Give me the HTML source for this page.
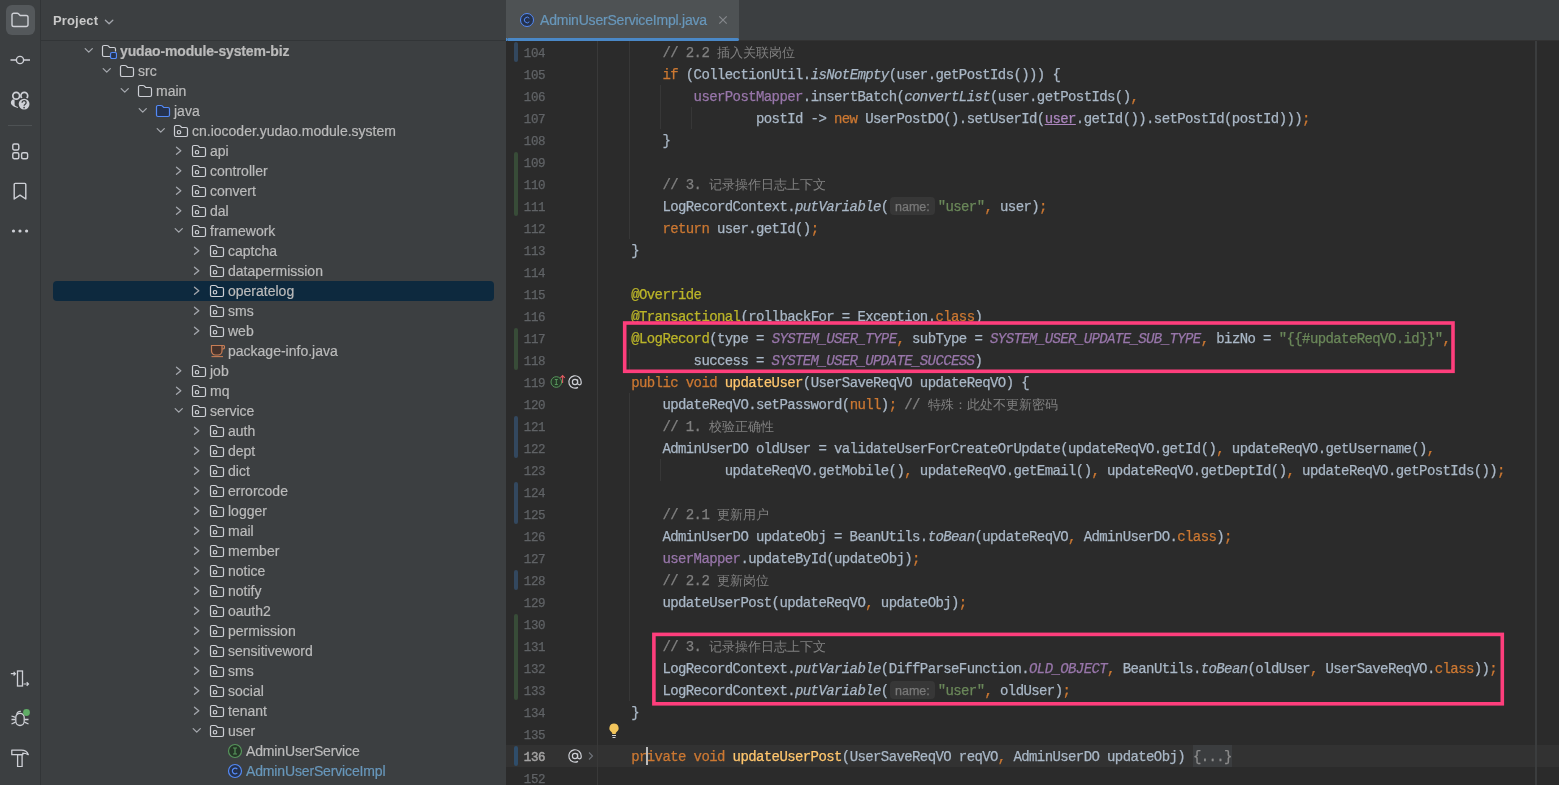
<!DOCTYPE html>
<html><head><meta charset="utf-8"><title>AdminUserServiceImpl.java</title>
<style>
html,body{margin:0;padding:0;}
body{width:1559px;height:785px;overflow:hidden;background:#3c3f41;position:relative;font-family:"Liberation Sans",sans-serif;font-size:13px;color:#bbbbbb;}
div{box-sizing:border-box;}
#strip{position:absolute;left:0;top:0;width:40px;height:785px;background:#3c3f41;}
#vsep{position:absolute;left:40px;top:0;width:1px;height:785px;background:#323537;}
#proj{position:absolute;left:41px;top:0;width:466px;height:785px;background:#3c3f41;overflow:hidden;}
#phead{position:absolute;left:41px;top:0;width:466px;height:40px;}
#hsep{position:absolute;left:41px;top:40px;width:466px;height:1px;background:#323537;}
#ptitle{position:absolute;left:53px;top:13px;font-weight:bold;font-size:13px;line-height:16px;color:#c9c9c9;letter-spacing:0.150px;}
.selbg{position:absolute;left:53px;width:441px;height:20px;background:#0d293e;border-radius:4px;}
.chv,.icn{position:absolute;width:16px;height:16px;}
.ic,.ch{width:16px;height:16px;display:block;}
.tx{-webkit-text-stroke:0.200px;position:absolute;margin-top:0px;height:20px;line-height:20px;white-space:nowrap;font-size:14px;color:#bbbbbb;letter-spacing:0px;}
.tx.bold{font-weight:bold;letter-spacing:-0.15px;}
.tx.blue{color:#6897bb;}
.tx.nar{letter-spacing:-0.150px;}
#ed{position:absolute;left:507px;top:0;width:1052px;height:785px;background:#2b2b2b;overflow:hidden;}
#tabbar{position:absolute;left:0;top:0;width:1052px;height:40px;background:#3c3f41;}
#tabline{position:absolute;left:0;top:40px;width:1052px;height:1px;background:#323232;}
#tab{position:absolute;left:0;top:0;width:232px;height:40px;background:#4e5254;}
#tabu{position:absolute;left:0;top:38px;width:232px;height:3px;background:#4a88c7;border-radius:1.5px;}
#tabtx{-webkit-text-stroke:0.200px;position:absolute;left:33px;top:10px;line-height:20px;font-size:14px;color:#6897bb;white-space:nowrap;letter-spacing:-0.200px;}
#caretrow{position:absolute;left:0;top:745px;width:1052px;height:22px;background:#323232;}
.ln{-webkit-text-stroke:0.250px;position:absolute;left:16.700px;width:40px;height:22px;line-height:22px;margin-top:2px;letter-spacing:-0.300px;font-family:"Liberation Mono",monospace;font-size:12.500px;color:#606366;white-space:pre;}
.ln.cur{color:#a4a3a3;-webkit-text-stroke:0.450px;}
.cl{-webkit-text-stroke:0.250px;position:absolute;left:93px;height:22px;line-height:22px;margin-top:1px;font-family:"Liberation Mono",monospace;font-size:14px;letter-spacing:-0.601px;color:#a9b7c6;white-space:pre;}
.k{color:#cc7832;}.c{color:#808080;}.a{color:#bbb529;}.f{color:#9876aa;}.s{color:#6a8759;}.m{color:#ffc66d;}
.i{font-style:italic;}.fi{color:#9876aa;font-style:italic;}
.u{color:#ab85bd;text-decoration:underline;text-decoration-color:#ab85bd;}
.z{font-size:13px;letter-spacing:0;-webkit-text-stroke:0;}
.fold{color:#8c8c8c;}
.hint{display:inline-block;width:49px;height:22px;vertical-align:top;position:relative;}
.hb{position:absolute;left:1.500px;top:1px;width:44.500px;height:17.500px;line-height:20px;border-radius:4px;background:#373737;color:#787878;letter-spacing:0;font-family:"Liberation Sans",sans-serif;font-size:12.500px;text-align:center;font-style:normal;}
.vm{position:absolute;left:7px;width:4px;border-radius:2px;}
.vm.b{background:#33485f;}.vm.cur{background:#2f4d6a;}.vm.g{background:#384c38;}
.ig{position:absolute;width:1px;background:#373737;}
#gsep{position:absolute;left:90px;top:41px;width:1px;height:744px;background:#393939;}
#rsep{position:absolute;left:1028px;top:41px;width:2px;height:744px;background:#3b3d3e;}
.pbox{position:absolute;border:3.600px solid #fe3e7c;}
#caret{position:absolute;left:139px;top:747px;width:2px;height:18px;background:#bbbbbb;}
.abs{position:absolute;}
#wrap{position:absolute;left:0;top:0;width:1559px;height:785px;will-change:transform;}
</style></head><body>
<div id="wrap">
<div id="strip">
 <div class="abs" style="left:6px;top:5px;width:29px;height:30px;border-radius:6px;background:#54585b;"></div>
 <svg class="abs" style="left:10px;top:10px" width="20" height="20" viewBox="0 0 20 20"><path d="M2 5A1.800 1.800 0 0 1 3.800 3.200h3.400a1.800 1.800 0 0 1 1.270.530L10.200 5.500H16.200A1.800 1.800 0 0 1 18 7.300v7.400a1.800 1.800 0 0 1 -1.800 1.800H3.800A1.800 1.800 0 0 1 2 14.700Z" fill="none" stroke="#ced0d6" stroke-width="1.400"/></svg>
 <svg class="abs" style="left:10px;top:50px" width="20" height="20" viewBox="0 0 20 20"><path d="M0.500 10h5.500M14 10h6" stroke="#ced0d6" stroke-width="1.400"/><circle cx="10" cy="10" r="3.600" fill="none" stroke="#ced0d6" stroke-width="1.400"/></svg>
 <svg class="abs" style="left:10px;top:90px" width="20" height="20" viewBox="0 0 20 20"><circle cx="6.200" cy="5.700" r="3.400" fill="none" stroke="#ced0d6" stroke-width="1.700"/><circle cx="14.300" cy="5.700" r="3.400" fill="none" stroke="#ced0d6" stroke-width="1.700"/><path d="M3.200 9.300C0.600 10.800 0 13.500 2.500 15.600C4 16.900 6 17.700 7.900 18.100L7.900 16.900C6 16.300 4.600 15.500 4.600 14.400L4.600 10.200Z" fill="#ced0d6"/><circle cx="14.100" cy="14.100" r="6.500" fill="#3c3f41"/><circle cx="14.100" cy="14.100" r="5.400" fill="#ced0d6"/><path d="M12.100 12.700a2 1.900 0 1 1 3.100 1.500c-.800.500-1.100.800-1.100 1.600" fill="none" stroke="#3c3f41" stroke-width="1.300"/><circle cx="14.100" cy="17.600" r="0.850" fill="#3c3f41"/></svg>
 <div class="abs" style="left:8px;top:125px;width:24px;height:1px;background:#4e5254;"></div>
 <svg class="abs" style="left:10px;top:141px" width="20" height="20" viewBox="0 0 20 20"><rect x="2.800" y="3" width="6" height="6" rx="1.500" fill="none" stroke="#ced0d6" stroke-width="1.400"/><rect x="2.800" y="11.700" width="6" height="6" rx="1.500" fill="none" stroke="#ced0d6" stroke-width="1.400"/><rect x="11.600" y="11.700" width="6" height="6" rx="1.500" fill="none" stroke="#ced0d6" stroke-width="1.400"/></svg>
 <svg class="abs" style="left:10px;top:181px" width="20" height="20" viewBox="0 0 20 20"><path d="M4.200 3.400a1 1 0 0 1 1-1h9.600a1 1 0 0 1 1 1V18L10 14.200 4.200 18Z" fill="none" stroke="#ced0d6" stroke-width="1.400" stroke-linejoin="round"/></svg>
 <svg class="abs" style="left:10px;top:221px" width="20" height="20" viewBox="0 0 20 20"><circle cx="3.500" cy="10" r="1.600" fill="#ced0d6"/><circle cx="10" cy="10" r="1.600" fill="#ced0d6"/><circle cx="16.600" cy="10" r="1.600" fill="#ced0d6"/></svg>
 <svg class="abs" style="left:10px;top:669px" width="20" height="20" viewBox="0 0 20 20"><rect x="7.500" y="2" width="5" height="15" fill="none" stroke="#ced0d6" stroke-width="1.300"/><path d="M0.800 4.700h4.500M3.600 2.900l1.800 1.800-1.800 1.800M13.500 15h5M16.700 13.200l1.800 1.800-1.800 1.800" fill="none" stroke="#ced0d6" stroke-width="1.200"/></svg>
 <svg class="abs" style="left:10px;top:708px" width="20" height="20" viewBox="0 0 20 20"><path d="M5.800 9.500a4.200 4.200 0 0 1 8.400 0v3.800a4.200 4.200 0 0 1 -8.400 0Z" fill="none" stroke="#ced0d6" stroke-width="1.300"/><path d="M6.800 6.500a3.300 3.300 0 0 1 4-3M1.500 8l4 1.300M1.500 11.500h4M1.500 16l4-1.800M18.500 11.500h-4M18.500 16l-4-1.800" fill="none" stroke="#ced0d6" stroke-width="1.300"/><circle cx="16.500" cy="4.500" r="3.400" fill="#5fad65"/></svg>
 <svg class="abs" style="left:10px;top:747px" width="20" height="20" viewBox="0 0 20 20"><path d="M1.800 3.200h9.500c3.500 0 6 1.500 7 4.500-2-1.200-4-1.500-5.500-1.500v1.500H1.800Z" fill="none" stroke="#ced0d6" stroke-width="1.300" stroke-linejoin="round"/><path d="M7.600 7.700h4.500v12h-4.500Z" fill="none" stroke="#ced0d6" stroke-width="1.300" stroke-linejoin="round"/></svg>
</div>
<div id="vsep"></div>
<div id="hsep"></div>
<div id="ptitle">Project</div>
<svg class="abs" style="left:101px;top:13.500px" width="16" height="16" viewBox="0 0 16 16"><path d="M4.400 6.200l3.700 3.600 3.700-3.600" fill="none" stroke="#a4a7ad" stroke-width="1.300" stroke-linecap="round" stroke-linejoin="round"/></svg>
<div class="chv" style="left:81px;top:43px"><svg class="ch" viewBox="0 0 16 16"><path d="M4.200 5.600L7.750 9.100 11.300 5.600" fill="none" stroke="#a4a7ad" stroke-width="1.300" stroke-linecap="round" stroke-linejoin="round"/></svg></div><div class="icn" style="left:101px;top:43px"><svg class="ic" viewBox="0 0 16 16"><path d="M9 13.500H3A1.5 1.5 0 0 1 1.5 12V4A1.5 1.5 0 0 1 3 2.5h3.100a1.500 1.500 0 0 1 1.060.440L8.700 4.500H13A1.500 1.500 0 0 1 14.500 6v2.500" fill="none" stroke="#ced0d6" stroke-width="1.200"/><rect x="9.5" y="9.500" width="6" height="6" rx="1.500" fill="#25324d" stroke="#548af7" stroke-width="1.200"/></svg></div><div class="tx bold" id="t0" style="left:120px;top:41px">yudao-module-system-biz</div>
<div class="chv" style="left:99px;top:63px"><svg class="ch" viewBox="0 0 16 16"><path d="M4.200 5.600L7.750 9.100 11.300 5.600" fill="none" stroke="#a4a7ad" stroke-width="1.300" stroke-linecap="round" stroke-linejoin="round"/></svg></div><div class="icn" style="left:119px;top:63px"><svg class="ic" viewBox="0 0 16 16"><path d="M1.5 4A1.5 1.5 0 0 1 3 2.5h3.1a1.5 1.5 0 0 1 1.06.44L8.7 4.5H13A1.5 1.5 0 0 1 14.5 6v6A1.5 1.5 0 0 1 13 13.500H3A1.5 1.5 0 0 1 1.5 12Z" fill="none" stroke="#ced0d6" stroke-width="1.200"/></svg></div><div class="tx" id="t1" style="left:138px;top:61px">src</div>
<div class="chv" style="left:117px;top:83px"><svg class="ch" viewBox="0 0 16 16"><path d="M4.200 5.600L7.750 9.100 11.300 5.600" fill="none" stroke="#a4a7ad" stroke-width="1.300" stroke-linecap="round" stroke-linejoin="round"/></svg></div><div class="icn" style="left:137px;top:83px"><svg class="ic" viewBox="0 0 16 16"><path d="M1.5 4A1.5 1.5 0 0 1 3 2.5h3.1a1.5 1.5 0 0 1 1.06.44L8.7 4.5H13A1.5 1.5 0 0 1 14.5 6v6A1.5 1.5 0 0 1 13 13.500H3A1.5 1.5 0 0 1 1.5 12Z" fill="none" stroke="#ced0d6" stroke-width="1.200"/></svg></div><div class="tx" id="t2" style="left:156px;top:81px">main</div>
<div class="chv" style="left:135px;top:103px"><svg class="ch" viewBox="0 0 16 16"><path d="M4.200 5.600L7.750 9.100 11.300 5.600" fill="none" stroke="#a4a7ad" stroke-width="1.300" stroke-linecap="round" stroke-linejoin="round"/></svg></div><div class="icn" style="left:155px;top:103px"><svg class="ic" viewBox="0 0 16 16"><path d="M1.5 4A1.5 1.5 0 0 1 3 2.5h3.1a1.5 1.5 0 0 1 1.06.44L8.7 4.5H13A1.5 1.5 0 0 1 14.5 6v6A1.5 1.5 0 0 1 13 13.500H3A1.5 1.5 0 0 1 1.5 12Z" fill="#25324d" stroke="#548af7" stroke-width="1.200"/></svg></div><div class="tx" id="t3" style="left:174px;top:101px">java</div>
<div class="chv" style="left:153px;top:123px"><svg class="ch" viewBox="0 0 16 16"><path d="M4.200 5.600L7.750 9.100 11.300 5.600" fill="none" stroke="#a4a7ad" stroke-width="1.300" stroke-linecap="round" stroke-linejoin="round"/></svg></div><div class="icn" style="left:173px;top:123px"><svg class="ic" viewBox="0 0 16 16"><path d="M1.5 4A1.5 1.5 0 0 1 3 2.5h3.1a1.5 1.5 0 0 1 1.06.44L8.7 4.5H13A1.5 1.5 0 0 1 14.5 6v6A1.5 1.5 0 0 1 13 13.500H3A1.5 1.5 0 0 1 1.5 12Z" fill="none" stroke="#ced0d6" stroke-width="1.200"/><circle cx="6" cy="9.250" r="1.750" fill="none" stroke="#ced0d6" stroke-width="1.200"/></svg></div><div class="tx" id="t4" style="left:192px;top:121px">cn.iocoder.yudao.module.system</div>
<div class="chv" style="left:171px;top:143px"><svg class="ch" viewBox="0 0 16 16"><path d="M5.500 4.200L9.800 7.750 5.500 11.300" fill="none" stroke="#a4a7ad" stroke-width="1.300" stroke-linecap="round" stroke-linejoin="round"/></svg></div><div class="icn" style="left:191px;top:143px"><svg class="ic" viewBox="0 0 16 16"><path d="M1.5 4A1.5 1.5 0 0 1 3 2.5h3.1a1.5 1.5 0 0 1 1.06.44L8.7 4.5H13A1.5 1.5 0 0 1 14.5 6v6A1.5 1.5 0 0 1 13 13.500H3A1.5 1.5 0 0 1 1.5 12Z" fill="none" stroke="#ced0d6" stroke-width="1.200"/><circle cx="6" cy="9.250" r="1.750" fill="none" stroke="#ced0d6" stroke-width="1.200"/></svg></div><div class="tx" id="t5" style="left:210px;top:141px">api</div>
<div class="chv" style="left:171px;top:163px"><svg class="ch" viewBox="0 0 16 16"><path d="M5.500 4.200L9.800 7.750 5.500 11.300" fill="none" stroke="#a4a7ad" stroke-width="1.300" stroke-linecap="round" stroke-linejoin="round"/></svg></div><div class="icn" style="left:191px;top:163px"><svg class="ic" viewBox="0 0 16 16"><path d="M1.5 4A1.5 1.5 0 0 1 3 2.5h3.1a1.5 1.5 0 0 1 1.06.44L8.7 4.5H13A1.5 1.5 0 0 1 14.5 6v6A1.5 1.5 0 0 1 13 13.500H3A1.5 1.5 0 0 1 1.5 12Z" fill="none" stroke="#ced0d6" stroke-width="1.200"/><circle cx="6" cy="9.250" r="1.750" fill="none" stroke="#ced0d6" stroke-width="1.200"/></svg></div><div class="tx" id="t6" style="left:210px;top:161px">controller</div>
<div class="chv" style="left:171px;top:183px"><svg class="ch" viewBox="0 0 16 16"><path d="M5.500 4.200L9.800 7.750 5.500 11.300" fill="none" stroke="#a4a7ad" stroke-width="1.300" stroke-linecap="round" stroke-linejoin="round"/></svg></div><div class="icn" style="left:191px;top:183px"><svg class="ic" viewBox="0 0 16 16"><path d="M1.5 4A1.5 1.5 0 0 1 3 2.5h3.1a1.5 1.5 0 0 1 1.06.44L8.7 4.5H13A1.5 1.5 0 0 1 14.5 6v6A1.5 1.5 0 0 1 13 13.500H3A1.5 1.5 0 0 1 1.5 12Z" fill="none" stroke="#ced0d6" stroke-width="1.200"/><circle cx="6" cy="9.250" r="1.750" fill="none" stroke="#ced0d6" stroke-width="1.200"/></svg></div><div class="tx" id="t7" style="left:210px;top:181px">convert</div>
<div class="chv" style="left:171px;top:203px"><svg class="ch" viewBox="0 0 16 16"><path d="M5.500 4.200L9.800 7.750 5.500 11.300" fill="none" stroke="#a4a7ad" stroke-width="1.300" stroke-linecap="round" stroke-linejoin="round"/></svg></div><div class="icn" style="left:191px;top:203px"><svg class="ic" viewBox="0 0 16 16"><path d="M1.5 4A1.5 1.5 0 0 1 3 2.5h3.1a1.5 1.5 0 0 1 1.06.44L8.7 4.5H13A1.5 1.5 0 0 1 14.5 6v6A1.5 1.5 0 0 1 13 13.500H3A1.5 1.5 0 0 1 1.5 12Z" fill="none" stroke="#ced0d6" stroke-width="1.200"/><circle cx="6" cy="9.250" r="1.750" fill="none" stroke="#ced0d6" stroke-width="1.200"/></svg></div><div class="tx" id="t8" style="left:210px;top:201px">dal</div>
<div class="chv" style="left:171px;top:223px"><svg class="ch" viewBox="0 0 16 16"><path d="M4.200 5.600L7.750 9.100 11.300 5.600" fill="none" stroke="#a4a7ad" stroke-width="1.300" stroke-linecap="round" stroke-linejoin="round"/></svg></div><div class="icn" style="left:191px;top:223px"><svg class="ic" viewBox="0 0 16 16"><path d="M1.5 4A1.5 1.5 0 0 1 3 2.5h3.1a1.5 1.5 0 0 1 1.06.44L8.7 4.5H13A1.5 1.5 0 0 1 14.5 6v6A1.5 1.5 0 0 1 13 13.500H3A1.5 1.5 0 0 1 1.5 12Z" fill="none" stroke="#ced0d6" stroke-width="1.200"/><circle cx="6" cy="9.250" r="1.750" fill="none" stroke="#ced0d6" stroke-width="1.200"/></svg></div><div class="tx" id="t9" style="left:210px;top:221px">framework</div>
<div class="chv" style="left:189px;top:243px"><svg class="ch" viewBox="0 0 16 16"><path d="M5.500 4.200L9.800 7.750 5.500 11.300" fill="none" stroke="#a4a7ad" stroke-width="1.300" stroke-linecap="round" stroke-linejoin="round"/></svg></div><div class="icn" style="left:209px;top:243px"><svg class="ic" viewBox="0 0 16 16"><path d="M1.5 4A1.5 1.5 0 0 1 3 2.5h3.1a1.5 1.5 0 0 1 1.06.44L8.7 4.5H13A1.5 1.5 0 0 1 14.5 6v6A1.5 1.5 0 0 1 13 13.500H3A1.5 1.5 0 0 1 1.5 12Z" fill="none" stroke="#ced0d6" stroke-width="1.200"/><circle cx="6" cy="9.250" r="1.750" fill="none" stroke="#ced0d6" stroke-width="1.200"/></svg></div><div class="tx" id="t10" style="left:228px;top:241px">captcha</div>
<div class="chv" style="left:189px;top:263px"><svg class="ch" viewBox="0 0 16 16"><path d="M5.500 4.200L9.800 7.750 5.500 11.300" fill="none" stroke="#a4a7ad" stroke-width="1.300" stroke-linecap="round" stroke-linejoin="round"/></svg></div><div class="icn" style="left:209px;top:263px"><svg class="ic" viewBox="0 0 16 16"><path d="M1.5 4A1.5 1.5 0 0 1 3 2.5h3.1a1.5 1.5 0 0 1 1.06.44L8.7 4.5H13A1.5 1.5 0 0 1 14.5 6v6A1.5 1.5 0 0 1 13 13.500H3A1.5 1.5 0 0 1 1.5 12Z" fill="none" stroke="#ced0d6" stroke-width="1.200"/><circle cx="6" cy="9.250" r="1.750" fill="none" stroke="#ced0d6" stroke-width="1.200"/></svg></div><div class="tx" id="t11" style="left:228px;top:261px">datapermission</div>
<div class="selbg" style="top:281px"></div><div class="chv" style="left:189px;top:283px"><svg class="ch" viewBox="0 0 16 16"><path d="M5.500 4.200L9.800 7.750 5.500 11.300" fill="none" stroke="#a4a7ad" stroke-width="1.300" stroke-linecap="round" stroke-linejoin="round"/></svg></div><div class="icn" style="left:209px;top:283px"><svg class="ic" viewBox="0 0 16 16"><path d="M1.5 4A1.5 1.5 0 0 1 3 2.5h3.1a1.5 1.5 0 0 1 1.06.44L8.7 4.5H13A1.5 1.5 0 0 1 14.5 6v6A1.5 1.5 0 0 1 13 13.500H3A1.5 1.5 0 0 1 1.5 12Z" fill="none" stroke="#ced0d6" stroke-width="1.200"/><circle cx="6" cy="9.250" r="1.750" fill="none" stroke="#ced0d6" stroke-width="1.200"/></svg></div><div class="tx" id="t12" style="left:228px;top:281px">operatelog</div>
<div class="chv" style="left:189px;top:303px"><svg class="ch" viewBox="0 0 16 16"><path d="M5.500 4.200L9.800 7.750 5.500 11.300" fill="none" stroke="#a4a7ad" stroke-width="1.300" stroke-linecap="round" stroke-linejoin="round"/></svg></div><div class="icn" style="left:209px;top:303px"><svg class="ic" viewBox="0 0 16 16"><path d="M1.5 4A1.5 1.5 0 0 1 3 2.5h3.1a1.5 1.5 0 0 1 1.06.44L8.7 4.5H13A1.5 1.5 0 0 1 14.5 6v6A1.5 1.5 0 0 1 13 13.500H3A1.5 1.5 0 0 1 1.5 12Z" fill="none" stroke="#ced0d6" stroke-width="1.200"/><circle cx="6" cy="9.250" r="1.750" fill="none" stroke="#ced0d6" stroke-width="1.200"/></svg></div><div class="tx" id="t13" style="left:228px;top:301px">sms</div>
<div class="chv" style="left:189px;top:323px"><svg class="ch" viewBox="0 0 16 16"><path d="M5.500 4.200L9.800 7.750 5.500 11.300" fill="none" stroke="#a4a7ad" stroke-width="1.300" stroke-linecap="round" stroke-linejoin="round"/></svg></div><div class="icn" style="left:209px;top:323px"><svg class="ic" viewBox="0 0 16 16"><path d="M1.5 4A1.5 1.5 0 0 1 3 2.5h3.1a1.5 1.5 0 0 1 1.06.44L8.7 4.5H13A1.5 1.5 0 0 1 14.5 6v6A1.5 1.5 0 0 1 13 13.500H3A1.5 1.5 0 0 1 1.5 12Z" fill="none" stroke="#ced0d6" stroke-width="1.200"/><circle cx="6" cy="9.250" r="1.750" fill="none" stroke="#ced0d6" stroke-width="1.200"/></svg></div><div class="tx" id="t14" style="left:228px;top:321px">web</div>
<div class="icn" style="left:209px;top:343px"><svg class="ic" viewBox="0 0 16 16"><path d="M2.500 2.500H13v5.500a4 4 0 0 1 -4 4H6.500a4 4 0 0 1 -4 -4Z" fill="#45322b" stroke="#c77d55" stroke-width="1.200"/><path d="M13 2.500h1.400a1.100 1.100 0 0 1 1.100 1.100v.700a1.700 1.700 0 0 1 -1.700 1.700H13" fill="none" stroke="#c77d55" stroke-width="1.200"/><path d="M2.500 13.600H14" stroke="#c77d55" stroke-width="1.100"/></svg></div><div class="tx" id="t15" style="left:228px;top:341px">package-info.java</div>
<div class="chv" style="left:171px;top:363px"><svg class="ch" viewBox="0 0 16 16"><path d="M5.500 4.200L9.800 7.750 5.500 11.300" fill="none" stroke="#a4a7ad" stroke-width="1.300" stroke-linecap="round" stroke-linejoin="round"/></svg></div><div class="icn" style="left:191px;top:363px"><svg class="ic" viewBox="0 0 16 16"><path d="M1.5 4A1.5 1.5 0 0 1 3 2.5h3.1a1.5 1.5 0 0 1 1.06.44L8.7 4.5H13A1.5 1.5 0 0 1 14.5 6v6A1.5 1.5 0 0 1 13 13.500H3A1.5 1.5 0 0 1 1.5 12Z" fill="none" stroke="#ced0d6" stroke-width="1.200"/><circle cx="6" cy="9.250" r="1.750" fill="none" stroke="#ced0d6" stroke-width="1.200"/></svg></div><div class="tx" id="t16" style="left:210px;top:361px">job</div>
<div class="chv" style="left:171px;top:383px"><svg class="ch" viewBox="0 0 16 16"><path d="M5.500 4.200L9.800 7.750 5.500 11.300" fill="none" stroke="#a4a7ad" stroke-width="1.300" stroke-linecap="round" stroke-linejoin="round"/></svg></div><div class="icn" style="left:191px;top:383px"><svg class="ic" viewBox="0 0 16 16"><path d="M1.5 4A1.5 1.5 0 0 1 3 2.5h3.1a1.5 1.5 0 0 1 1.06.44L8.7 4.5H13A1.5 1.5 0 0 1 14.5 6v6A1.5 1.5 0 0 1 13 13.500H3A1.5 1.5 0 0 1 1.5 12Z" fill="none" stroke="#ced0d6" stroke-width="1.200"/><circle cx="6" cy="9.250" r="1.750" fill="none" stroke="#ced0d6" stroke-width="1.200"/></svg></div><div class="tx" id="t17" style="left:210px;top:381px">mq</div>
<div class="chv" style="left:171px;top:403px"><svg class="ch" viewBox="0 0 16 16"><path d="M4.200 5.600L7.750 9.100 11.300 5.600" fill="none" stroke="#a4a7ad" stroke-width="1.300" stroke-linecap="round" stroke-linejoin="round"/></svg></div><div class="icn" style="left:191px;top:403px"><svg class="ic" viewBox="0 0 16 16"><path d="M1.5 4A1.5 1.5 0 0 1 3 2.5h3.1a1.5 1.5 0 0 1 1.06.44L8.7 4.5H13A1.5 1.5 0 0 1 14.5 6v6A1.5 1.5 0 0 1 13 13.500H3A1.5 1.5 0 0 1 1.5 12Z" fill="none" stroke="#ced0d6" stroke-width="1.200"/><circle cx="6" cy="9.250" r="1.750" fill="none" stroke="#ced0d6" stroke-width="1.200"/></svg></div><div class="tx" id="t18" style="left:210px;top:401px">service</div>
<div class="chv" style="left:189px;top:423px"><svg class="ch" viewBox="0 0 16 16"><path d="M5.500 4.200L9.800 7.750 5.500 11.300" fill="none" stroke="#a4a7ad" stroke-width="1.300" stroke-linecap="round" stroke-linejoin="round"/></svg></div><div class="icn" style="left:209px;top:423px"><svg class="ic" viewBox="0 0 16 16"><path d="M1.5 4A1.5 1.5 0 0 1 3 2.5h3.1a1.5 1.5 0 0 1 1.06.44L8.7 4.5H13A1.5 1.5 0 0 1 14.5 6v6A1.5 1.5 0 0 1 13 13.500H3A1.5 1.5 0 0 1 1.5 12Z" fill="none" stroke="#ced0d6" stroke-width="1.200"/><circle cx="6" cy="9.250" r="1.750" fill="none" stroke="#ced0d6" stroke-width="1.200"/></svg></div><div class="tx" id="t19" style="left:228px;top:421px">auth</div>
<div class="chv" style="left:189px;top:443px"><svg class="ch" viewBox="0 0 16 16"><path d="M5.500 4.200L9.800 7.750 5.500 11.300" fill="none" stroke="#a4a7ad" stroke-width="1.300" stroke-linecap="round" stroke-linejoin="round"/></svg></div><div class="icn" style="left:209px;top:443px"><svg class="ic" viewBox="0 0 16 16"><path d="M1.5 4A1.5 1.5 0 0 1 3 2.5h3.1a1.5 1.5 0 0 1 1.06.44L8.7 4.5H13A1.5 1.5 0 0 1 14.5 6v6A1.5 1.5 0 0 1 13 13.500H3A1.5 1.5 0 0 1 1.5 12Z" fill="none" stroke="#ced0d6" stroke-width="1.200"/><circle cx="6" cy="9.250" r="1.750" fill="none" stroke="#ced0d6" stroke-width="1.200"/></svg></div><div class="tx" id="t20" style="left:228px;top:441px">dept</div>
<div class="chv" style="left:189px;top:463px"><svg class="ch" viewBox="0 0 16 16"><path d="M5.500 4.200L9.800 7.750 5.500 11.300" fill="none" stroke="#a4a7ad" stroke-width="1.300" stroke-linecap="round" stroke-linejoin="round"/></svg></div><div class="icn" style="left:209px;top:463px"><svg class="ic" viewBox="0 0 16 16"><path d="M1.5 4A1.5 1.5 0 0 1 3 2.5h3.1a1.5 1.5 0 0 1 1.06.44L8.7 4.5H13A1.5 1.5 0 0 1 14.5 6v6A1.5 1.5 0 0 1 13 13.500H3A1.5 1.5 0 0 1 1.5 12Z" fill="none" stroke="#ced0d6" stroke-width="1.200"/><circle cx="6" cy="9.250" r="1.750" fill="none" stroke="#ced0d6" stroke-width="1.200"/></svg></div><div class="tx" id="t21" style="left:228px;top:461px">dict</div>
<div class="chv" style="left:189px;top:483px"><svg class="ch" viewBox="0 0 16 16"><path d="M5.500 4.200L9.800 7.750 5.500 11.300" fill="none" stroke="#a4a7ad" stroke-width="1.300" stroke-linecap="round" stroke-linejoin="round"/></svg></div><div class="icn" style="left:209px;top:483px"><svg class="ic" viewBox="0 0 16 16"><path d="M1.5 4A1.5 1.5 0 0 1 3 2.5h3.1a1.5 1.5 0 0 1 1.06.44L8.7 4.5H13A1.5 1.5 0 0 1 14.5 6v6A1.5 1.5 0 0 1 13 13.500H3A1.5 1.5 0 0 1 1.5 12Z" fill="none" stroke="#ced0d6" stroke-width="1.200"/><circle cx="6" cy="9.250" r="1.750" fill="none" stroke="#ced0d6" stroke-width="1.200"/></svg></div><div class="tx" id="t22" style="left:228px;top:481px">errorcode</div>
<div class="chv" style="left:189px;top:503px"><svg class="ch" viewBox="0 0 16 16"><path d="M5.500 4.200L9.800 7.750 5.500 11.300" fill="none" stroke="#a4a7ad" stroke-width="1.300" stroke-linecap="round" stroke-linejoin="round"/></svg></div><div class="icn" style="left:209px;top:503px"><svg class="ic" viewBox="0 0 16 16"><path d="M1.5 4A1.5 1.5 0 0 1 3 2.5h3.1a1.5 1.5 0 0 1 1.06.44L8.7 4.5H13A1.5 1.5 0 0 1 14.5 6v6A1.5 1.5 0 0 1 13 13.500H3A1.5 1.5 0 0 1 1.5 12Z" fill="none" stroke="#ced0d6" stroke-width="1.200"/><circle cx="6" cy="9.250" r="1.750" fill="none" stroke="#ced0d6" stroke-width="1.200"/></svg></div><div class="tx" id="t23" style="left:228px;top:501px">logger</div>
<div class="chv" style="left:189px;top:523px"><svg class="ch" viewBox="0 0 16 16"><path d="M5.500 4.200L9.800 7.750 5.500 11.300" fill="none" stroke="#a4a7ad" stroke-width="1.300" stroke-linecap="round" stroke-linejoin="round"/></svg></div><div class="icn" style="left:209px;top:523px"><svg class="ic" viewBox="0 0 16 16"><path d="M1.5 4A1.5 1.5 0 0 1 3 2.5h3.1a1.5 1.5 0 0 1 1.06.44L8.7 4.5H13A1.5 1.5 0 0 1 14.5 6v6A1.5 1.5 0 0 1 13 13.500H3A1.5 1.5 0 0 1 1.5 12Z" fill="none" stroke="#ced0d6" stroke-width="1.200"/><circle cx="6" cy="9.250" r="1.750" fill="none" stroke="#ced0d6" stroke-width="1.200"/></svg></div><div class="tx" id="t24" style="left:228px;top:521px">mail</div>
<div class="chv" style="left:189px;top:543px"><svg class="ch" viewBox="0 0 16 16"><path d="M5.500 4.200L9.800 7.750 5.500 11.300" fill="none" stroke="#a4a7ad" stroke-width="1.300" stroke-linecap="round" stroke-linejoin="round"/></svg></div><div class="icn" style="left:209px;top:543px"><svg class="ic" viewBox="0 0 16 16"><path d="M1.5 4A1.5 1.5 0 0 1 3 2.5h3.1a1.5 1.5 0 0 1 1.06.44L8.7 4.5H13A1.5 1.5 0 0 1 14.5 6v6A1.5 1.5 0 0 1 13 13.500H3A1.5 1.5 0 0 1 1.5 12Z" fill="none" stroke="#ced0d6" stroke-width="1.200"/><circle cx="6" cy="9.250" r="1.750" fill="none" stroke="#ced0d6" stroke-width="1.200"/></svg></div><div class="tx" id="t25" style="left:228px;top:541px">member</div>
<div class="chv" style="left:189px;top:563px"><svg class="ch" viewBox="0 0 16 16"><path d="M5.500 4.200L9.800 7.750 5.500 11.300" fill="none" stroke="#a4a7ad" stroke-width="1.300" stroke-linecap="round" stroke-linejoin="round"/></svg></div><div class="icn" style="left:209px;top:563px"><svg class="ic" viewBox="0 0 16 16"><path d="M1.5 4A1.5 1.5 0 0 1 3 2.5h3.1a1.5 1.5 0 0 1 1.06.44L8.7 4.5H13A1.5 1.5 0 0 1 14.5 6v6A1.5 1.5 0 0 1 13 13.500H3A1.5 1.5 0 0 1 1.5 12Z" fill="none" stroke="#ced0d6" stroke-width="1.200"/><circle cx="6" cy="9.250" r="1.750" fill="none" stroke="#ced0d6" stroke-width="1.200"/></svg></div><div class="tx" id="t26" style="left:228px;top:561px">notice</div>
<div class="chv" style="left:189px;top:583px"><svg class="ch" viewBox="0 0 16 16"><path d="M5.500 4.200L9.800 7.750 5.500 11.300" fill="none" stroke="#a4a7ad" stroke-width="1.300" stroke-linecap="round" stroke-linejoin="round"/></svg></div><div class="icn" style="left:209px;top:583px"><svg class="ic" viewBox="0 0 16 16"><path d="M1.5 4A1.5 1.5 0 0 1 3 2.5h3.1a1.5 1.5 0 0 1 1.06.44L8.7 4.5H13A1.5 1.5 0 0 1 14.5 6v6A1.5 1.5 0 0 1 13 13.500H3A1.5 1.5 0 0 1 1.5 12Z" fill="none" stroke="#ced0d6" stroke-width="1.200"/><circle cx="6" cy="9.250" r="1.750" fill="none" stroke="#ced0d6" stroke-width="1.200"/></svg></div><div class="tx" id="t27" style="left:228px;top:581px">notify</div>
<div class="chv" style="left:189px;top:603px"><svg class="ch" viewBox="0 0 16 16"><path d="M5.500 4.200L9.800 7.750 5.500 11.300" fill="none" stroke="#a4a7ad" stroke-width="1.300" stroke-linecap="round" stroke-linejoin="round"/></svg></div><div class="icn" style="left:209px;top:603px"><svg class="ic" viewBox="0 0 16 16"><path d="M1.5 4A1.5 1.5 0 0 1 3 2.5h3.1a1.5 1.5 0 0 1 1.06.44L8.7 4.5H13A1.5 1.5 0 0 1 14.5 6v6A1.5 1.5 0 0 1 13 13.500H3A1.5 1.5 0 0 1 1.5 12Z" fill="none" stroke="#ced0d6" stroke-width="1.200"/><circle cx="6" cy="9.250" r="1.750" fill="none" stroke="#ced0d6" stroke-width="1.200"/></svg></div><div class="tx" id="t28" style="left:228px;top:601px">oauth2</div>
<div class="chv" style="left:189px;top:623px"><svg class="ch" viewBox="0 0 16 16"><path d="M5.500 4.200L9.800 7.750 5.500 11.300" fill="none" stroke="#a4a7ad" stroke-width="1.300" stroke-linecap="round" stroke-linejoin="round"/></svg></div><div class="icn" style="left:209px;top:623px"><svg class="ic" viewBox="0 0 16 16"><path d="M1.5 4A1.5 1.5 0 0 1 3 2.5h3.1a1.5 1.5 0 0 1 1.06.44L8.7 4.5H13A1.5 1.5 0 0 1 14.5 6v6A1.5 1.5 0 0 1 13 13.500H3A1.5 1.5 0 0 1 1.5 12Z" fill="none" stroke="#ced0d6" stroke-width="1.200"/><circle cx="6" cy="9.250" r="1.750" fill="none" stroke="#ced0d6" stroke-width="1.200"/></svg></div><div class="tx" id="t29" style="left:228px;top:621px">permission</div>
<div class="chv" style="left:189px;top:643px"><svg class="ch" viewBox="0 0 16 16"><path d="M5.500 4.200L9.800 7.750 5.500 11.300" fill="none" stroke="#a4a7ad" stroke-width="1.300" stroke-linecap="round" stroke-linejoin="round"/></svg></div><div class="icn" style="left:209px;top:643px"><svg class="ic" viewBox="0 0 16 16"><path d="M1.5 4A1.5 1.5 0 0 1 3 2.5h3.1a1.5 1.5 0 0 1 1.06.44L8.7 4.5H13A1.5 1.5 0 0 1 14.5 6v6A1.5 1.5 0 0 1 13 13.500H3A1.5 1.5 0 0 1 1.5 12Z" fill="none" stroke="#ced0d6" stroke-width="1.200"/><circle cx="6" cy="9.250" r="1.750" fill="none" stroke="#ced0d6" stroke-width="1.200"/></svg></div><div class="tx" id="t30" style="left:228px;top:641px">sensitiveword</div>
<div class="chv" style="left:189px;top:663px"><svg class="ch" viewBox="0 0 16 16"><path d="M5.500 4.200L9.800 7.750 5.500 11.300" fill="none" stroke="#a4a7ad" stroke-width="1.300" stroke-linecap="round" stroke-linejoin="round"/></svg></div><div class="icn" style="left:209px;top:663px"><svg class="ic" viewBox="0 0 16 16"><path d="M1.5 4A1.5 1.5 0 0 1 3 2.5h3.1a1.5 1.5 0 0 1 1.06.44L8.7 4.5H13A1.5 1.5 0 0 1 14.5 6v6A1.5 1.5 0 0 1 13 13.500H3A1.5 1.5 0 0 1 1.5 12Z" fill="none" stroke="#ced0d6" stroke-width="1.200"/><circle cx="6" cy="9.250" r="1.750" fill="none" stroke="#ced0d6" stroke-width="1.200"/></svg></div><div class="tx" id="t31" style="left:228px;top:661px">sms</div>
<div class="chv" style="left:189px;top:683px"><svg class="ch" viewBox="0 0 16 16"><path d="M5.500 4.200L9.800 7.750 5.500 11.300" fill="none" stroke="#a4a7ad" stroke-width="1.300" stroke-linecap="round" stroke-linejoin="round"/></svg></div><div class="icn" style="left:209px;top:683px"><svg class="ic" viewBox="0 0 16 16"><path d="M1.5 4A1.5 1.5 0 0 1 3 2.5h3.1a1.5 1.5 0 0 1 1.06.44L8.7 4.5H13A1.5 1.5 0 0 1 14.5 6v6A1.5 1.5 0 0 1 13 13.500H3A1.5 1.5 0 0 1 1.5 12Z" fill="none" stroke="#ced0d6" stroke-width="1.200"/><circle cx="6" cy="9.250" r="1.750" fill="none" stroke="#ced0d6" stroke-width="1.200"/></svg></div><div class="tx" id="t32" style="left:228px;top:681px">social</div>
<div class="chv" style="left:189px;top:703px"><svg class="ch" viewBox="0 0 16 16"><path d="M5.500 4.200L9.800 7.750 5.500 11.300" fill="none" stroke="#a4a7ad" stroke-width="1.300" stroke-linecap="round" stroke-linejoin="round"/></svg></div><div class="icn" style="left:209px;top:703px"><svg class="ic" viewBox="0 0 16 16"><path d="M1.5 4A1.5 1.5 0 0 1 3 2.5h3.1a1.5 1.5 0 0 1 1.06.44L8.7 4.5H13A1.5 1.5 0 0 1 14.5 6v6A1.5 1.5 0 0 1 13 13.500H3A1.5 1.5 0 0 1 1.5 12Z" fill="none" stroke="#ced0d6" stroke-width="1.200"/><circle cx="6" cy="9.250" r="1.750" fill="none" stroke="#ced0d6" stroke-width="1.200"/></svg></div><div class="tx" id="t33" style="left:228px;top:701px">tenant</div>
<div class="chv" style="left:189px;top:723px"><svg class="ch" viewBox="0 0 16 16"><path d="M4.200 5.600L7.750 9.100 11.300 5.600" fill="none" stroke="#a4a7ad" stroke-width="1.300" stroke-linecap="round" stroke-linejoin="round"/></svg></div><div class="icn" style="left:209px;top:723px"><svg class="ic" viewBox="0 0 16 16"><path d="M1.5 4A1.5 1.5 0 0 1 3 2.5h3.1a1.5 1.5 0 0 1 1.06.44L8.7 4.5H13A1.5 1.5 0 0 1 14.5 6v6A1.5 1.5 0 0 1 13 13.500H3A1.5 1.5 0 0 1 1.5 12Z" fill="none" stroke="#ced0d6" stroke-width="1.200"/><circle cx="6" cy="9.250" r="1.750" fill="none" stroke="#ced0d6" stroke-width="1.200"/></svg></div><div class="tx" id="t34" style="left:228px;top:721px">user</div>
<div class="icn" style="left:227px;top:743px"><svg class="ic" viewBox="0 0 16 16"><circle cx="8" cy="8" r="6.500" fill="#253627" stroke="#57965c" stroke-width="1.200"/><path d="M6 5h4M6 11h4M8 5v6" stroke="#57965c" stroke-width="1.200" fill="none"/></svg></div><div class="tx nar" id="t35" style="left:246px;top:741px">AdminUserService</div>
<div class="icn" style="left:227px;top:763px"><svg class="ic" viewBox="0 0 16 16"><circle cx="8" cy="8" r="6.500" fill="#25324d" stroke="#548af7" stroke-width="1.200"/><path d="M10.300 9.800A2.800 2.800 0 1 1 10.300 6.200" stroke="#548af7" stroke-width="1.200" fill="none"/></svg></div><div class="tx blue nar" id="t36" style="left:246px;top:761px">AdminUserServiceImpl</div>
<div class="abs" style="left:506px;top:0;width:1px;height:785px;background:#2b2b2b;"></div><div class="abs" style="left:506px;top:0;width:1px;height:38px;background:#4e5254;"></div><div class="abs" style="left:506px;top:38px;width:1px;height:3px;background:#4a88c7;"></div><div class="abs" style="left:506px;top:745px;width:1px;height:22px;background:#323232;"></div>
<div id="ed">
 <div id="tabbar"></div>
 <div id="tabline"></div>
 <div id="tab"></div>
 <div id="tabu"></div>
 <svg class="abs" style="left:12px;top:12px" width="16" height="16" viewBox="0 0 16 16"><circle cx="8" cy="8" r="6.500" fill="#25324d" stroke="#548af7" stroke-width="1"/><path d="M10.300 9.800A2.800 2.800 0 1 1 10.300 6.200" stroke="#548af7" stroke-width="1" fill="none"/></svg>
 <div id="tabtx">AdminUserServiceImpl.java</div>
 <svg class="abs" style="left:208px;top:12px" width="16" height="16" viewBox="0 0 16 16"><path d="M4.300 4.300l7.400 7.400M11.700 4.300l-7.400 7.400" stroke="#85888c" stroke-width="1.200"/></svg>
 <div id="caretrow"></div>
 <div class="abs" style="left:685.500px;top:745px;width:39px;height:22px;background:#3b3d3f;"></div>
 <div id="gsep"></div>
 <div id="rsep"></div>
<div class="vm b" style="top:42px;height:20px"></div>
<div class="vm g" style="top:152px;height:64px"></div>
<div class="vm g" style="top:328px;height:42px"></div>
<div class="vm b" style="top:416px;height:42px"></div>
<div class="vm b" style="top:482px;height:42px"></div>
<div class="vm b" style="top:570px;height:20px"></div>
<div class="vm g" style="top:614px;height:86px"></div>
<div class="vm b cur" style="top:746px;height:20px"></div>
<div class="ig" style="left:122px;top:41px;height:198px"></div>
<div class="ig" style="left:153px;top:85px;height:44px"></div>
<div class="ig" style="left:184px;top:107px;height:22px"></div>
<div class="ig" style="left:122px;top:349px;height:22px"></div>
<div class="ig" style="left:122px;top:393px;height:308px"></div>
<div class="ig" style="left:153px;top:459px;height:22px"></div>
<div class="ln" style="top:41px">104</div>
<div class="ln" style="top:63px">105</div>
<div class="ln" style="top:85px">106</div>
<div class="ln" style="top:107px">107</div>
<div class="ln" style="top:129px">108</div>
<div class="ln" style="top:151px">109</div>
<div class="ln" style="top:173px">110</div>
<div class="ln" style="top:195px">111</div>
<div class="ln" style="top:217px">112</div>
<div class="ln" style="top:239px">113</div>
<div class="ln" style="top:261px">114</div>
<div class="ln" style="top:283px">115</div>
<div class="ln" style="top:305px">116</div>
<div class="ln" style="top:327px">117</div>
<div class="ln" style="top:349px">118</div>
<div class="ln" style="top:371px">119</div>
<div class="ln" style="top:393px">120</div>
<div class="ln" style="top:415px">121</div>
<div class="ln" style="top:437px">122</div>
<div class="ln" style="top:459px">123</div>
<div class="ln" style="top:481px">124</div>
<div class="ln" style="top:503px">125</div>
<div class="ln" style="top:525px">126</div>
<div class="ln" style="top:547px">127</div>
<div class="ln" style="top:569px">128</div>
<div class="ln" style="top:591px">129</div>
<div class="ln" style="top:613px">130</div>
<div class="ln" style="top:635px">131</div>
<div class="ln" style="top:657px">132</div>
<div class="ln" style="top:679px">133</div>
<div class="ln" style="top:701px">134</div>
<div class="ln" style="top:723px">135</div>
<div class="ln cur" style="top:745px">136</div>
<div class="ln" style="top:767px">152</div>
<div class="cl" id="L104" style="top:41px">        <span class="c">// 2.2 <span class="z">插入关联岗位</span></span></div>
<div class="cl" id="L105" style="top:63px">        <span class="k">if</span> (CollectionUtil.<span class="i">isNotEmpty</span>(user.getPostIds())) {</div>
<div class="cl" id="L106" style="top:85px">            <span class="f">userPostMapper</span>.insertBatch(<span class="i">convertList</span>(user.getPostIds()<span class="k">,</span></div>
<div class="cl" id="L107" style="top:107px">                    postId -&gt; <span class="k">new</span> UserPostDO().setUserId(<span class="u">user</span>.getId()).setPostId(postId)))<span class="k">;</span></div>
<div class="cl" id="L108" style="top:129px">        }</div>
<div class="cl" id="L109" style="top:151px"></div>
<div class="cl" id="L110" style="top:173px">        <span class="c">// 3. <span class="z">记录操作日志上下文</span></span></div>
<div class="cl" id="L111" style="top:195px">        LogRecordContext.<span class="i">putVariable</span>(<span class="hint"><span class="hb">name:</span></span><span class="s">&quot;user&quot;</span><span class="k">,</span> user)<span class="k">;</span></div>
<div class="cl" id="L112" style="top:217px">        <span class="k">return</span> user.getId()<span class="k">;</span></div>
<div class="cl" id="L113" style="top:239px">    }</div>
<div class="cl" id="L114" style="top:261px"></div>
<div class="cl" id="L115" style="top:283px">    <span class="a">@Override</span></div>
<div class="cl" id="L116" style="top:305px">    <span class="a">@Transactional</span>(rollbackFor = Exception.<span class="k">class</span>)</div>
<div class="cl" id="L117" style="top:327px">    <span class="a">@LogRecord</span>(type = <span class="fi">SYSTEM_USER_TYPE</span><span class="k">,</span> subType = <span class="fi">SYSTEM_USER_UPDATE_SUB_TYPE</span><span class="k">,</span> bizNo = <span class="s">&quot;{{#updateReqVO.id}}&quot;</span><span class="k">,</span></div>
<div class="cl" id="L118" style="top:349px">            success = <span class="fi">SYSTEM_USER_UPDATE_SUCCESS</span>)</div>
<div class="cl" id="L119" style="top:371px">    <span class="k">public void </span><span class="m">updateUser</span>(UserSaveReqVO updateReqVO) {</div>
<div class="cl" id="L120" style="top:393px">        updateReqVO.setPassword(<span class="k">null</span>)<span class="k">;</span> <span class="c">// <span class="z">特殊：此处不更新密码</span></span></div>
<div class="cl" id="L121" style="top:415px">        <span class="c">// 1. <span class="z">校验正确性</span></span></div>
<div class="cl" id="L122" style="top:437px">        AdminUserDO oldUser = validateUserForCreateOrUpdate(updateReqVO.getId()<span class="k">,</span> updateReqVO.getUsername()<span class="k">,</span></div>
<div class="cl" id="L123" style="top:459px">                updateReqVO.getMobile()<span class="k">,</span> updateReqVO.getEmail()<span class="k">,</span> updateReqVO.getDeptId()<span class="k">,</span> updateReqVO.getPostIds())<span class="k">;</span></div>
<div class="cl" id="L124" style="top:481px"></div>
<div class="cl" id="L125" style="top:503px">        <span class="c">// 2.1 <span class="z">更新用户</span></span></div>
<div class="cl" id="L126" style="top:525px">        AdminUserDO updateObj = BeanUtils.<span class="i">toBean</span>(updateReqVO<span class="k">,</span> AdminUserDO.<span class="k">class</span>)<span class="k">;</span></div>
<div class="cl" id="L127" style="top:547px">        <span class="f">userMapper</span>.updateById(updateObj)<span class="k">;</span></div>
<div class="cl" id="L128" style="top:569px">        <span class="c">// 2.2 <span class="z">更新岗位</span></span></div>
<div class="cl" id="L129" style="top:591px">        updateUserPost(updateReqVO<span class="k">,</span> updateObj)<span class="k">;</span></div>
<div class="cl" id="L130" style="top:613px"></div>
<div class="cl" id="L131" style="top:635px">        <span class="c">// 3. <span class="z">记录操作日志上下文</span></span></div>
<div class="cl" id="L132" style="top:657px">        LogRecordContext.<span class="i">putVariable</span>(DiffParseFunction.<span class="fi">OLD_OBJECT</span><span class="k">,</span> BeanUtils.<span class="i">toBean</span>(oldUser<span class="k">,</span> UserSaveReqVO.<span class="k">class</span>))<span class="k">;</span></div>
<div class="cl" id="L133" style="top:679px">        LogRecordContext.<span class="i">putVariable</span>(<span class="hint"><span class="hb">name:</span></span><span class="s">&quot;user&quot;</span><span class="k">,</span> oldUser)<span class="k">;</span></div>
<div class="cl" id="L134" style="top:701px">    }</div>
<div class="cl" id="L135" style="top:723px"></div>
<div class="cl" id="L136" style="top:745px">    <span class="k">private void </span><span class="m">updateUserPost</span>(UserSaveReqVO reqVO<span class="k">,</span> AdminUserDO updateObj) <span class="fold">{...}</span></div>
<div class="cl" id="L152" style="top:767px"></div>
 <div id="caret"></div>
 <!-- gutter icons line 119 -->
 <svg class="abs" style="left:43px;top:374px" width="16" height="16" viewBox="0 0 16 16"><circle cx="6.300" cy="8" r="5.300" fill="#253627" stroke="#57965c" stroke-width="1"/><path d="M4.800 5.500h3M4.800 10.500h3M6.300 5.500v5" stroke="#57965c" stroke-width="1" fill="none"/><path d="M12.600 9V1.500M10.400 3.900L12.600 1.600l2.200 2.300" stroke="#e05a5f" stroke-width="1.050" fill="none"/></svg>
 <svg class="abs" style="left:60px;top:374px" width="16" height="16" viewBox="0 0 16 16"><circle cx="8" cy="8" r="2.600" fill="none" stroke="#ced0d6" stroke-width="1.200"/><path d="M10.600 5.400V9a1.700 1.700 0 0 0 3.600 0V8A6.200 6.200 0 1 0 11 13.400" fill="none" stroke="#ced0d6" stroke-width="1.200"/></svg>
 <!-- gutter icons line 136 -->
 <svg class="abs" style="left:60px;top:748px" width="16" height="16" viewBox="0 0 16 16"><circle cx="8" cy="8" r="2.600" fill="none" stroke="#ced0d6" stroke-width="1.200"/><path d="M10.600 5.400V9a1.700 1.700 0 0 0 3.600 0V8A6.200 6.200 0 1 0 11 13.400" fill="none" stroke="#ced0d6" stroke-width="1.200"/></svg>
 <svg class="abs" style="left:76px;top:748px" width="16" height="16" viewBox="0 0 16 16"><path d="M6 4.500L9.500 8 6 11.500" fill="none" stroke="#6f737a" stroke-width="1.100"/></svg>
 <!-- bulb -->
 <svg class="abs" style="left:99px;top:722px" width="16" height="18" viewBox="0 0 16 18"><path d="M8 1.500a4.600 4.600 0 0 0 -2.600 8.400c.6.500.9 1.100.9 1.800v.3h3.400v-.3c0-.7.300-1.300.9-1.800A4.600 4.600 0 0 0 8 1.500Z" fill="#f2c55c"/><path d="M6 13.500h4M6.500 15.500h3" stroke="#ced0d6" stroke-width="1.200"/></svg>
 <svg class="abs" style="left:0;top:0" width="1052" height="785" viewBox="507 0 1052 785"><rect x="624.700" y="323" width="828.300" height="48.300" fill="none" stroke="#fe3e7c" stroke-width="3.600"/><rect x="653.900" y="634.400" width="848.400" height="69.400" fill="none" stroke="#fe3e7c" stroke-width="3.600"/></svg>
</div>
</div>
</div>
</body></html>
